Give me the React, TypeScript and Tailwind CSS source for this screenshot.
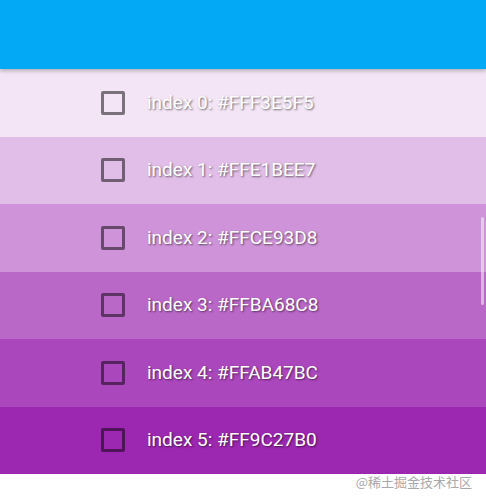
const rows = [
  { label: 'index 0: #FFF3E5F5', bg: 'bg-[#f3e5f5]' },
  { label: 'index 1: #FFE1BEE7', bg: 'bg-[#e1bee7]' },
  { label: 'index 2: #FFCE93D8', bg: 'bg-[#ce93d8]' },
  { label: 'index 3: #FFBA68C8', bg: 'bg-[#ba68c8]' },
  { label: 'index 4: #FFAB47BC', bg: 'bg-[#ab47bc]' },
  { label: 'index 5: #FF9C27B0', bg: 'bg-[#9c27b0]' },
];

const App = () => {
  return (
    <div className="relative w-[486px] h-[500px] overflow-hidden bg-white font-['Roboto',sans-serif]">
      {/* App bar */}
      <div className="relative z-10 h-[69px] bg-[#03a9f4] shadow-[0_2px_4px_rgba(0,0,0,0.25)]" />

      {/* List */}
      <div className="flex flex-col">
        {rows.map((row) => (
          <div key={row.label} className={`flex items-center h-[67.5px] pl-[101px] ${row.bg}`}>
            <div className="w-[24px] h-[24px] rounded-[2px] border-[3px] border-black/50" />
            <span className="ml-[22px] text-[19px] text-white [text-shadow:1px_1px_2px_rgba(0,0,0,0.55)]">
              {row.label}
            </span>
          </div>
        ))}
      </div>

      {/* Scrollbar */}
      <div className="absolute right-[2px] top-[217px] w-[3px] h-[88px] rounded-full bg-white/50" />

      {/* Watermark */}
      <div className="absolute right-[14px] bottom-[9px] text-[13px] text-[#a8a8a8] font-['Noto_Sans_CJK_SC',sans-serif]">
        @稀土掘金技术社区
      </div>
    </div>
  );
};

export default App;
